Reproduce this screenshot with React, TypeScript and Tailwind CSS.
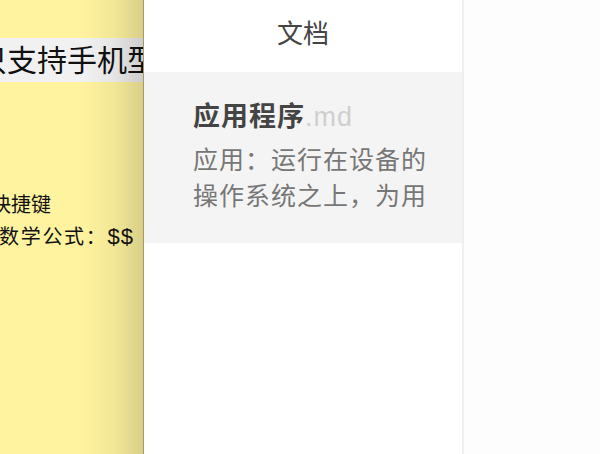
import React from 'react';

const font = { fontFamily: '"Liberation Sans", "Noto Sans CJK SC", sans-serif' };

const App: React.FC = () => {
  return (
    <div className="flex h-[454px] w-[600px] overflow-hidden bg-white" style={font}>
      {/* editor peeking out on the left */}
      <div className="relative w-[144px] shrink-0 overflow-hidden border-r border-[#a39b66] bg-[#fff39f] text-[#111]">
        <div className="pt-[38px]">
          <div className="ml-[-23px] h-[44px] whitespace-nowrap bg-[#f1f1f1] text-[30px] leading-[46px]">只支持手机型号</div>
          <div className="mt-[107px] whitespace-nowrap text-[20px] leading-[32px]">
            <div className="ml-[-9px]">快捷键</div>
            <div className="ml-[-1px] tracking-[1.7px]">
              数学公式：<span className="text-[22px] tracking-[1px]">$$</span>
            </div>
          </div>
        </div>
        <div className="absolute inset-y-0 right-0 w-[60px] bg-linear-to-r from-transparent via-black/5 to-black/15" />
      </div>

      {/* document list */}
      <div className="flex w-[318px] shrink-0 flex-col bg-white">
        <div className="flex h-[72px] items-center justify-center pb-[4px] text-[26px] text-[#444]">
          文档
        </div>
        <div className="h-[171px] bg-[#f4f4f4] pl-[49px] pt-[27px]">
          <div className="whitespace-nowrap text-[27px] leading-[36px] tracking-[1px]">
            <span className="font-bold text-[#444]">应用程序</span>
            <span className="text-[#cfcfcf]">.md</span>
          </div>
          <div className="mt-[7px] h-[72px] w-[245px] overflow-hidden text-[25px] leading-[36px] tracking-[1px] text-[#777]">
            应用：运行在设备的操作系统之上，为用户提供特定功能的计算机程序。
          </div>
        </div>
      </div>

      <div className="w-[2px] shrink-0 bg-[#efefef]" />
      <div className="flex-1 bg-[#fdfdfd]" />
    </div>
  );
};

export default App;
